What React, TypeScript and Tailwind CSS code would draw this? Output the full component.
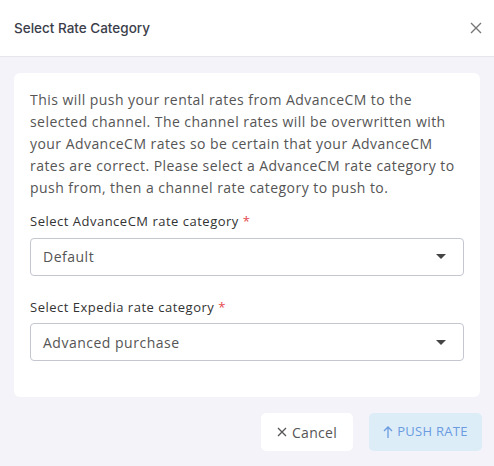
const body = { fontFamily: '"Open Sans", "Noto Sans", sans-serif' }

function Select({ label, value }: { label: string; value: string }) {
  return (
    <div>
      <p className="text-[13px] font-medium tracking-[0.5px] text-[#333]">
        {label} <span className="text-[#e5484d]">*</span>
      </p>
      <div className="mt-[6px] flex h-[38px] items-center justify-between rounded-[4px] border border-[#c4c6d0] pl-[12px] pr-[17px] text-[14px] tracking-[0.5px] text-[#555]">
        <span>{value}</span>
        <svg width="10" height="5" viewBox="0 0 10 5">
          <path d="M0 0h10L5 5z" fill="#444" />
        </svg>
      </div>
    </div>
  )
}

export default function App() {
  return (
    <div className="flex h-[466px] w-[494px] flex-col bg-[#f3f3f9]" style={body}>
      <div className="flex h-[57px] items-center justify-between border-b border-[#e6e6ee] bg-white pl-[14px] pr-[12px]">
        <h2 className="text-[13.5px] font-medium text-[#3b3e4a]" style={{ fontFamily: 'Inter, sans-serif' }}>
          Select Rate Category
        </h2>
        <svg width="12" height="12" viewBox="0 0 12 12" stroke="#777" strokeWidth="1.4">
          <path d="M1 1l10 10M11 1L1 11" />
        </svg>
      </div>
      <div className="px-[14px] pt-[16px]">
        <div className="rounded-[6px] bg-white px-[16px] pt-[16px] pb-[36px]">
          <p className="text-[14px] leading-[22px] tracking-[0.45px] text-[#555]">
            This will push your rental rates from AdvanceCM to the selected channel. The channel rates will be overwritten with your AdvanceCM rates so be certain that your AdvanceCM rates are correct. Please select a AdvanceCM rate category to push from, then a channel rate category to push to.
          </p>
          <div className="mt-[13px] flex flex-col gap-[22px]">
            <Select label="Select AdvanceCM rate category" value="Default" />
            <Select label="Select Expedia rate category" value="Advanced purchase" />
          </div>
        </div>
        <div className="mt-[16px] -mr-[2px] flex justify-end gap-[16px]">
          <button className="flex h-[38px] w-[92px] items-center justify-center gap-[5px] rounded-[5px] bg-white text-[14px] tracking-[0.3px] text-[#555]">
            <svg width="10" height="10" viewBox="0 0 10 10" stroke="#555" strokeWidth="1.3">
              <path d="M1 1l8 8M9 1L1 9" />
            </svg>
            Cancel
          </button>
          <button className="flex h-[38px] w-[113px] items-center justify-center gap-[4px] rounded-[5px] bg-[#dcedf8] text-[13px] tracking-[0.3px] text-[#6b9be0]">
            <svg width="10" height="13" viewBox="0 0 10 13" fill="none" stroke="#6b9be0" strokeWidth="1.3">
              <path d="M5 12V1M1 5l4-4 4 4" />
            </svg>
            PUSH RATE
          </button>
        </div>
      </div>
    </div>
  )
}
